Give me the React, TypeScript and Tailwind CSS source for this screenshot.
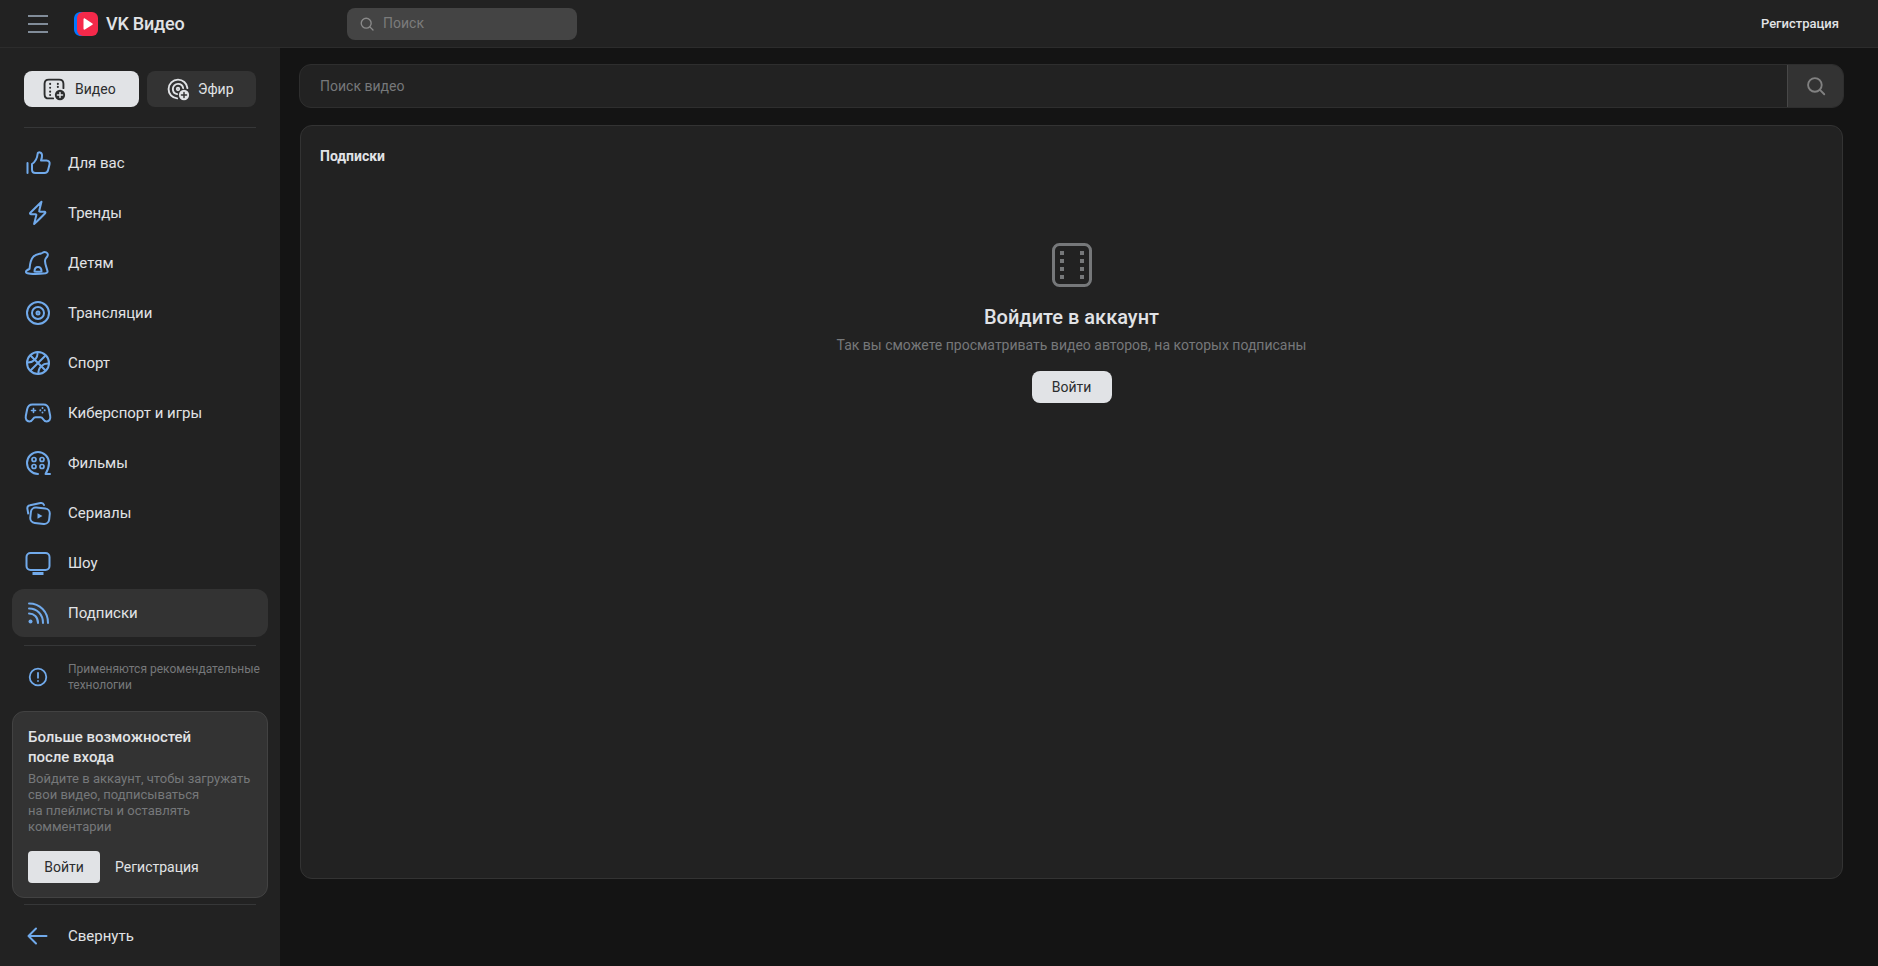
import type { ReactNode } from "react";

const Icon = ({ children, size = 28 }: { children: ReactNode; size?: number }) => (
  <svg
    width={size}
    height={size}
    viewBox="0 0 28 28"
    fill="none"
    stroke="currentColor"
    strokeWidth="2"
    strokeLinecap="round"
    strokeLinejoin="round"
    className="shrink-0"
  >
    {children}
  </svg>
);

const SearchIcon = ({ size }: { size: number }) => (
  <svg width={size} height={size} viewBox="0 0 20 20" fill="none" stroke="currentColor" strokeWidth="1.7" strokeLinecap="round">
    <circle cx="9" cy="9" r="6.2" />
    <path d="M13.6 13.6 17.5 17.5" />
  </svg>
);

const navItems: { label: string; icon: ReactNode }[] = [
  {
    label: "Для вас",
    icon: (
      <>
        <path d="M3.500 14v10" />
        <path d="M8 15c3-2 5.200-5.600 5.600-10 .2-2.400 4-2.200 4.400 1 .2 1.800-.3 3.500-1 5.500h5.500c2.400 0 3.600 1.800 3 4l-1.400 5.600c-.5 2-1.800 3-3.600 3H11.500c-2 0-3.500-1.500-3.500-3.500z" />
      </>
    ),
  },
  {
    label: "Тренды",
    icon: <path d="M17.500 2.800 6.300 13.800c-.6.600-.3 1.400.5 1.400h4.700c.7 0 1 .5.8 1.100l-2.200 8.800c3.600-3.400 7.300-6.900 11-10.900.6-.6.300-1.400-.5-1.400h-4.500c-.7 0-1.100-.5-.9-1.100z" />,
  },
  {
    label: "Детям",
    icon: (
      <>
        <path d="M5.500 20c.4-5 1.500-10 4-12.500 2.500-2.500 5.500-2.500 7.500-3 1.500-.4 2-1.500 3.500-1.500 2.500 0 4 2 3 4-1 2-2.500 2.500-2.500 5 0 3 1.500 6.500 2.500 10 .3 1-.4 2-2 2.300-3 .4-6 .7-10 .7-4 0-6.500-.2-8-.7-1.500-.4-2-1.500-1-2.500.7-.7 1.500-1.300 3-1.800" />
        <path d="M10.500 22.500c0-2.800 1.500-4.500 3.500-4.500s3.500 1.700 3.500 4.500c-2.300.4-4.700.4-7 0z" />
      </>
    ),
  },
  {
    label: "Трансляции",
    icon: (
      <>
        <circle cx="14" cy="14" r="11" />
        <circle cx="14" cy="14" r="6" />
        <circle cx="14" cy="14" r="1.500" />
      </>
    ),
  },
  {
    label: "Спорт",
    icon: (
      <>
        <circle cx="14" cy="14" r="11" />
        <path d="M6.500 6.500 21.500 21.500M21.500 6.500 6.500 21.500" />
        <path d="M13.500 3.200c.3 3-.7 5.600-2.700 7.600-2 2-4.700 3-7.700 2.700M24.900 14.500c-3-.3-5.700.7-7.700 2.700-2 2-3 4.600-2.700 7.600" />
      </>
    ),
  },
  {
    label: "Киберспорт и игры",
    icon: (
      <>
        <path d="M8.500 5.500h11c3 0 4.800 2 5.400 5l1.300 6.500c.6 3-1 5.500-3.500 5.500-1.700 0-2.800-1-3.700-2.500-.7-1.200-1.400-1.700-2.700-1.700h-4.600c-1.300 0-2 .5-2.700 1.700-.9 1.500-2 2.500-3.700 2.500-2.500 0-4.100-2.500-3.500-5.500l1.300-6.500c.6-3 2.400-5 5.400-5z" />
        <path d="M7.500 11.500h4M9.500 9.500v4" strokeWidth="1.600" />
        <path d="M18.500 9v.1M18.500 13.500v.1M16.300 11.300v.1M20.700 11.300v.1" strokeWidth="1.900" />
      </>
    ),
  },
  {
    label: "Фильмы",
    icon: (
      <>
        <path d="M14 25C8 25 3 20 3 14S8 3 14 3s11 5 11 11c0 4.300-1.500 7.700-3.500 11H26" />
        <circle cx="10" cy="10.500" r="2" strokeWidth="1.700" />
        <circle cx="18" cy="10.500" r="2" strokeWidth="1.700" />
        <circle cx="10" cy="17.500" r="2" strokeWidth="1.700" />
        <circle cx="18" cy="17.500" r="2" strokeWidth="1.700" />
      </>
    ),
  },
  {
    label: "Сериалы",
    icon: (
      <>
        <path d="M4.200 14.500 3.400 9.800c-.3-1.800.8-3.300 2.600-3.600L16.500 4c1.700-.3 3 .5 3.500 2" />
        <rect x="6.500" y="9" width="19" height="15.500" rx="5" transform="rotate(6 16 17)" />
        <path d="M13.500 14.200v5.600l5-2.800z" fill="currentColor" stroke="none" />
      </>
    ),
  },
  {
    label: "Шоу",
    icon: (
      <>
        <rect x="2.500" y="4" width="23" height="17" rx="4" />
        <path d="M8.500 24.500h11" strokeWidth="3" strokeLinecap="butt" />
      </>
    ),
  },
  {
    label: "Подписки",
    icon: (
      <>
        <circle cx="6.500" cy="22.500" r="2" fill="currentColor" stroke="none" />
        <path d="M5 14.500c5 0 9 3.500 9 9.500" />
        <path d="M5 9.500c8 0 14 5.800 14 14.500" />
        <path d="M5 4.500c11 0 19 8 19 19.500" />
      </>
    ),
  },
];

export default function App() {
  return (
    <div className="min-h-[966px] h-[966px] overflow-hidden flex flex-col bg-[#141414] text-[#e1e3e6] font-['Roboto',sans-serif]">
      <header className="h-[48px] shrink-0 flex items-center bg-[#222222] border-b border-[#2c2c2c]">
        <div className="w-[347px] flex items-center pl-[28px]">
          <div className="w-[20px] flex flex-col gap-[6px]">
            <div className="h-[2px] bg-[#818c99]" />
            <div className="h-[2px] bg-[#818c99]" />
            <div className="h-[2px] bg-[#818c99]" />
          </div>
          <svg width="24" height="24" viewBox="0 0 24 24" className="ml-[26px] shrink-0">
            <path d="M7 0h7v24H7c-4 0-7-2.500-7-7V7c0-4.500 3-7 7-7z" fill="#0077ff" />
            <rect x="3" y="0" width="21" height="24" rx="6" fill="#f5294a" />
            <path d="M9.500 7.300c0-.8.800-1.200 1.400-.8l7.500 5c.6.400.6.900 0 1.300l-7.500 4.700c-.6.400-1.400 0-1.400-.8z" fill="#fff" />
          </svg>
          <span className="ml-[8px] text-[18px] tracking-[-0.2px] font-medium leading-[24px] text-[#e1e3e6]">VK Видео</span>
        </div>
        <div className="w-[230px] h-[32px] rounded-[8px] bg-[#444444] flex items-center pl-[12px] gap-[8px] text-[#8a8a8a]">
          <SearchIcon size={16} />
          <span className="text-[14px] text-[#7b7b7b]">Поиск</span>
        </div>
        <span className="ml-auto mr-[39px] text-[13px] font-medium text-[#e1e3e6]">Регистрация</span>
      </header>

      <div className="flex flex-1 min-h-0">
        <aside className="w-[280px] shrink-0 bg-[#222222] flex flex-col">
          <div className="px-[24px] pt-[23px] pb-[11px]">
            <div className="flex gap-[8px] pb-[20px] border-b border-[#363738]">
              <div className="w-[115px] h-[36px] rounded-[8px] bg-[#e1e3e6] text-[#2c2d2e] flex items-center pl-[18px] gap-[9px]">
                <Icon size={24}>
                  <path d="M13 25H8c-3 0-5-2-5-5V8c0-3 2-5 5-5h12c3 0 5 2 5 5v5" strokeWidth="2.200" />
                  <path d="M9.500 8v.1M9.500 12.500v.1M9.500 17v.1M9.500 21v.1M18.500 8v.1M18.500 11.500v.1" strokeWidth="2.400" />
                  <circle cx="21" cy="21" r="6" fill="currentColor" stroke="none" />
                  <path d="M21 18v6M18 21h6" stroke="#e1e3e6" strokeWidth="1.700" />
                </Icon>
                <span className="text-[14px]">Видео</span>
              </div>
              <div className="w-[109px] h-[36px] rounded-[8px] bg-[#333333] text-[#e1e3e6] flex items-center pl-[19px] gap-[8px]">
                <Icon size={24}>
                  <path d="M13 25C7 24.500 3 20 3 14 3 8 8 3 14 3c5.500 0 10.500 4 11 10" strokeWidth="2.200" />
                  <path d="M13 20c-3-.5-5-3-5-6 0-3.300 2.700-6 6-6 3 0 5.500 2 6 5" strokeWidth="2.200" />
                  <circle cx="14" cy="14" r="1.500" strokeWidth="2" />
                  <circle cx="21" cy="21" r="6" fill="currentColor" stroke="none" />
                  <path d="M21 18v6M18 21h6" stroke="#333333" strokeWidth="1.700" />
                </Icon>
                <span className="text-[14px]">Эфир</span>
              </div>
            </div>
          </div>

          <nav className="px-[12px] flex flex-col gap-[2px]">
            {navItems.map((item) => (
              <div
                key={item.label}
                className={`h-[48px] rounded-[12px] flex items-center pl-[12px] gap-[16px] text-[15px] ${
                  item.label === "Подписки" ? "bg-[#333333]" : ""
                }`}
              >
                <span className="text-[#71aaeb] flex">
                  <Icon>{item.icon}</Icon>
                </span>
                <span className="text-[#e1e3e6]">{item.label}</span>
              </div>
            ))}
          </nav>

          <div className="mx-[24px] mt-[8px] border-t border-[#363738]" />

          <div className="flex items-center pl-[26px] mt-[15px] gap-[18px]">
            <svg width="24" height="24" viewBox="0 0 24 24" fill="none" stroke="#71aaeb" strokeWidth="1.800" strokeLinecap="round" className="shrink-0">
              <circle cx="12" cy="12" r="8.300" />
              <path d="M12 7.800v5M12 16v.1" />
            </svg>
            <p className="text-[12px] leading-[16px] text-[#76787a]">
              Применяются рекомендательные технологии
            </p>
          </div>

          <div className="mx-[12px] mt-[18px] h-[187px] rounded-[12px] bg-[#333333] border border-[#424242] pt-[15px] pl-[15px]">
            <h3 className="text-[15px] leading-[20px] font-medium tracking-[-0.03px]">
              Больше возможностей
              <br />
              после входа
            </h3>
            <p className="mt-[4px] text-[13px] leading-[16px] text-[#76787a]">
              Войдите в аккаунт, чтобы загружать
              <br />
              свои видео, подписываться
              <br />
              на плейлисты и оставлять
              <br />
              комментарии
            </p>
            <div className="mt-[16px] flex items-center">
              <div className="w-[72px] h-[32px] rounded-[4px] bg-[#e1e3e6] text-[#2c2d2e] text-[14px] flex items-center justify-center">
                Войти
              </div>
              <span className="ml-[15px] text-[14px] text-[#e1e3e6]">Регистрация</span>
            </div>
          </div>

          <div className="mx-[24px] mt-[6px] border-t border-[#363738]" />

          <div className="flex items-center h-[48px] pl-[24px] gap-[16px] mt-[7px] text-[15px]">
            <span className="text-[#71aaeb] flex">
              <Icon>
                <path d="M4.500 14h18M12 6.500 4.500 14l7.500 7.500" />
              </Icon>
            </span>
            Свернуть
          </div>
        </aside>

        <main className="flex-1 min-w-0 pl-[19px] pr-[34px] pt-[16px]">
          <div className="h-[44px] flex rounded-[12px] overflow-hidden bg-[#222222] border border-[#2e2e2e]">
            <div className="flex-1 flex items-center pl-[20px] text-[14px] text-[#76787a]">Поиск видео</div>
            <div className="w-[56px] bg-[#333333] border-l border-[#484848] flex items-center justify-center text-[#818181]">
              <SearchIcon size={22} />
            </div>
          </div>

          <section className="mx-[1px] mt-[17px] h-[754px] rounded-[12px] bg-[#222222] border border-[#333333] pt-[20px] flex flex-col items-center">
            <h2 className="self-start pl-[19px] text-[14px] leading-[20px] font-bold">Подписки</h2>
            <svg width="40" height="44" viewBox="0 0 40 44" fill="none" className="mt-[77px]">
              <rect x="1.500" y="1.500" width="37" height="41" rx="6" stroke="#76787a" strokeWidth="3" />
              <path
                d="M8 8h4v4H8zM8 16h4v4H8zM8 24h4v4H8zM8 32h4v4H8zM28 8h4v4h-4zM28 16h4v4h-4zM28 24h4v4h-4zM28 32h4v4h-4z"
                fill="#76787a"
              />
            </svg>
            <h3 className="mt-[17px] text-[20px] leading-[26px] font-medium text-[#e1e3e6]">Войдите в аккаунт</h3>
            <p className="mt-[6px] text-[14px] leading-[18px] text-[#76787a]">
              Так вы сможете просматривать видео авторов, на которых подписаны
            </p>
            <div className="mt-[17px] w-[80px] h-[32px] rounded-[8px] bg-[#e1e3e6] text-[#2c2d2e] text-[14px] flex items-center justify-center">
              Войти
            </div>
          </section>
        </main>
      </div>
    </div>
  );
}
